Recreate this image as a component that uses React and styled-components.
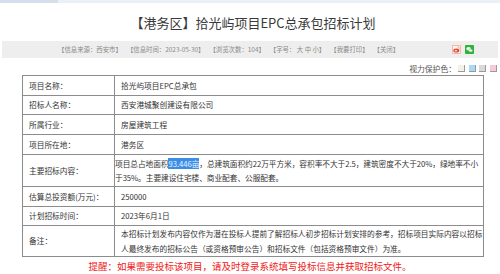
import * as React from 'react';
import styled, {createGlobalStyle} from 'styled-components';

const infoItems = [
	'【信息来源：西安市】',
	'【信息时间：2023-05-30】',
	'【浏览次数：104】',
	'【字号： 大 中 小】',
	'【我要打印】',
	'【关闭】',
];

const swatches = ['#f4f2e6', '#a6d9f2', '#d9d9d9', '#f6cbd5', '#ddd0f0'];

export default function App() {
	const rows = [
		{label: '项目名称：', value: '拾光屿项目EPC总承包', height: 20},
		{label: '招标人名称：', value: '西安港城聚创建设有限公司', height: 19},
		{label: '所属行业：', value: '房屋建筑工程', height: 20},
		{label: '项目所在地：', value: '港务区', height: 20},
		{
			label: '主要招标内容：',
			height: 32,
			tight: true,
			value: (
				<>
					项目总占地面积<Selected>93.446亩</Selected>，总建筑面积约22万平方米，容积率不大于2.5，建筑密度不大于20%，绿地率不小于35%。主要建设住宅楼、商业配套、公服配套。
				</>
			),
		},
		{label: '估算总投资额(万元)：', value: '250000', height: 20},
		{label: '计划招标时间：', value: '2023年6月1日', height: 19},
		{
			label: '备注：',
			height: 31,
			lineHeight: 15,
			value: '本招标计划发布内容仅作为潜在投标人提前了解招标人初步招标计划安排的参考，招标项目实际内容以招标人最终发布的招标公告（或资格预审公告）和招标文件（包括资格预审文件）为准。',
		},
	];

	return (
		<>
			<GlobalStyle />
			<Page>
				<TopStrip>
					<TopStripActive />
				</TopStrip>
				<Header>
					<Title>【港务区】拾光屿项目EPC总承包招标计划</Title>
				</Header>
				<InfoBar>
					<InfoList>
						{infoItems.map((item) => (
							<span key={item}>{item}</span>
						))}
					</InfoList>
					<ShareIcons>
						<svg width='9' height='9' viewBox='0 0 9 9'>
							<rect x='0' y='0' width='9' height='9' rx='1' fill='#f2b8a8' />
							<rect x='1' y='1' width='7' height='7' fill='#fff3ef' />
							<ellipse cx='4.3' cy='5.6' rx='3' ry='2' fill='#e23c2a' />
							<ellipse cx='4' cy='5.8' rx='1.4' ry='1' fill='#fff' />
							<circle cx='4' cy='5.9' r='0.5' fill='#222' />
							<path d='M5.6 1.8 a2 2 0 0 1 1.8 2' stroke='#f29a1c' strokeWidth='0.8' fill='none' />
						</svg>
						<svg width='9' height='9' viewBox='0 0 9 9'>
							<rect x='0' y='0' width='9' height='9' rx='1' fill='#2fb23b' />
							<ellipse cx='3.6' cy='3.8' rx='2.3' ry='1.8' fill='#fff' />
							<ellipse cx='5.6' cy='5.5' rx='2' ry='1.6' fill='#fff' stroke='#2fb23b' strokeWidth='0.5' />
						</svg>
					</ShareIcons>
				</InfoBar>
				<ProtectBar>
					<span>视力保护色：</span>
					{swatches.map((c) => (
						<Swatch key={c} $color={c} />
					))}
				</ProtectBar>
				<Table>
					<colgroup>
						<col style={{width: '92px'}} />
						<col />
					</colgroup>
					<tbody>
						{rows.map((row) => (
							<tr key={row.label} style={{height: row.height + 'px'}}>
								<LabelCell>{row.label}</LabelCell>
								<ValueCell $tight={row.tight} $lineHeight={row.lineHeight}>
									{row.value}
								</ValueCell>
							</tr>
						))}
					</tbody>
				</Table>
				<Footer>提醒：如果需要投标该项目，请及时登录系统填写投标信息并获取招标文件。</Footer>
			</Page>
		</>
	);
}

const GlobalStyle = createGlobalStyle`
	html, body {
		margin: 0;
		padding: 0;
		background: #fff;
		overflow: hidden;
	}
	body {
		font-family: "Noto Sans CJK SC", "Noto Sans", sans-serif;
		color: #333;
	}
`;

const Page = styled.div`
	width: 500px;
	height: 274px;
	overflow: hidden;
	display: flex;
	flex-direction: column;
`;

const TopStrip = styled.div`
	height: 3px;
	flex-shrink: 0;
	background: #eaf0f7;
	display: flex;
`;

const TopStripActive = styled.div`
	width: 58px;
	background: #d4e0ee;
`;

const Header = styled.div`
	height: 38px;
	flex-shrink: 0;
	display: flex;
	align-items: center;
	justify-content: center;
	padding-left: 6px;
`;

const Title = styled.h1`
	margin: 0;
	font-size: 13px;
	font-weight: normal;
	color: #3a3a3a;
`;

const InfoBar = styled.div`
	height: 17px;
	flex-shrink: 0;
	margin: 0 2px;
	background: #eeeeee;
	display: flex;
	align-items: center;
	padding: 0 24px 0 56px;
`;

const InfoList = styled.div`
	display: flex;
	gap: 5px;
	font-size: 6.4px;
	color: #8a8a8a;
	white-space: pre;
`;

const ShareIcons = styled.div`
	margin-left: auto;
	display: flex;
	gap: 4px;
	> svg {
		display: block;
	}
`;

const ProtectBar = styled.div`
	height: 17px;
	flex-shrink: 0;
	margin-right: -7px;
	padding-top: 3px;
	box-sizing: border-box;
	display: flex;
	align-items: center;
	justify-content: flex-end;
	font-size: 7.8px;
	color: #555;
	> span {
		margin-right: 2px;
	}
`;

const Swatch = styled.i`
	display: block;
	width: 6px;
	height: 6px;
	background: ${(p) => p.$color};
	border-right: 1px solid #9a9a9a;
	border-bottom: 1px solid #9a9a9a;
	margin-left: 3.5px;
	&:first-of-type {
		margin-left: 0;
	}
`;

const Table = styled.table`
	width: 462px;
	flex-shrink: 0;
	margin-left: 22px;
	border-collapse: collapse;
	table-layout: fixed;
	font-size: 7.7px;
	color: #333;
	td {
		border: 1px solid #8c8c8c;
		vertical-align: middle;
	}
`;

const LabelCell = styled.td`
	padding: 0 0 0 6px;
	line-height: 12px;
`;

const ValueCell = styled.td`
	padding: ${(p) => (p.$tight ? '0' : '0 0 0 6px')};
	letter-spacing: ${(p) => (p.$tight ? '-0.05px' : '0')};
	line-height: ${(p) => (p.$lineHeight || 14) + 'px'};
`;

const Selected = styled.span`
	background: #3a8ee6;
	color: #eaf3ff;
`;

const Footer = styled.div`
	height: 18px;
	flex-shrink: 0;
	display: flex;
	align-items: center;
	justify-content: center;
	font-size: 9.5px;
	color: #f01818;
`;
